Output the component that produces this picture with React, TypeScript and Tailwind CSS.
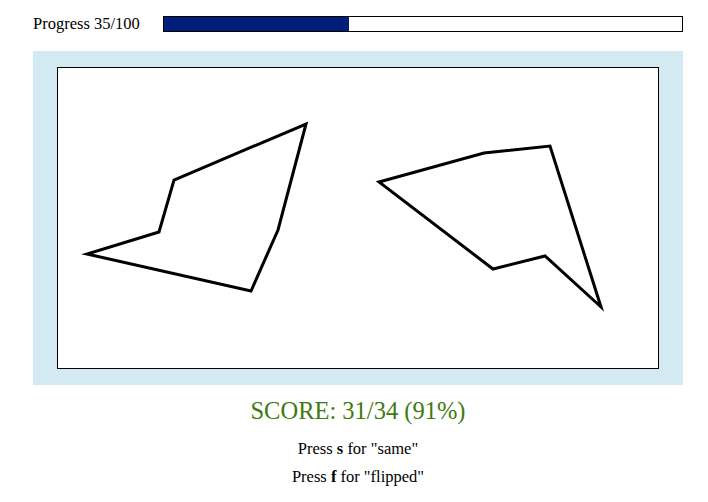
export default function App() {
  return (
    <div className="w-[708px] h-[502px] bg-white font-['Liberation_Serif',serif] text-black">
      <div className="flex items-center pt-4 pl-[33px]">
        <div className="w-[130px] text-[16.5px] leading-4">Progress 35/100</div>
        <div className="w-[520px] h-4 border border-black bg-white">
          <div className="h-full w-[185px] bg-[#001f7a]" />
        </div>
      </div>
      <div className="ml-[33px] w-[650px]">
        <div className="mt-[19px] h-[334px] bg-[#d4eaf2] flex items-center justify-center">
          <div className="w-[602px] h-[302px] border border-black bg-white">
            <svg width="600" height="300" viewBox="0 0 600 300">
              <polygon
                points="248,56 220,162 193,223 29,186 101,164 116,112"
                fill="none"
                stroke="black"
                strokeWidth="3"
              />
              <polygon
                points="321,114 426,85 492,78 543,239 487,188 435,201"
                fill="none"
                stroke="black"
                strokeWidth="3"
              />
            </svg>
          </div>
        </div>
        <div className="text-center mt-[12px] text-[24.5px] leading-7 text-[#3f7a0e]">SCORE: 31/34 (91%)</div>
        <div className="text-center mt-[10px] text-[16.5px] leading-[28px]">
          <p>
            Press <b>s</b> for "same"
          </p>
          <p>
            Press <b>f</b> for "flipped"
          </p>
        </div>
      </div>
    </div>
  );
}
